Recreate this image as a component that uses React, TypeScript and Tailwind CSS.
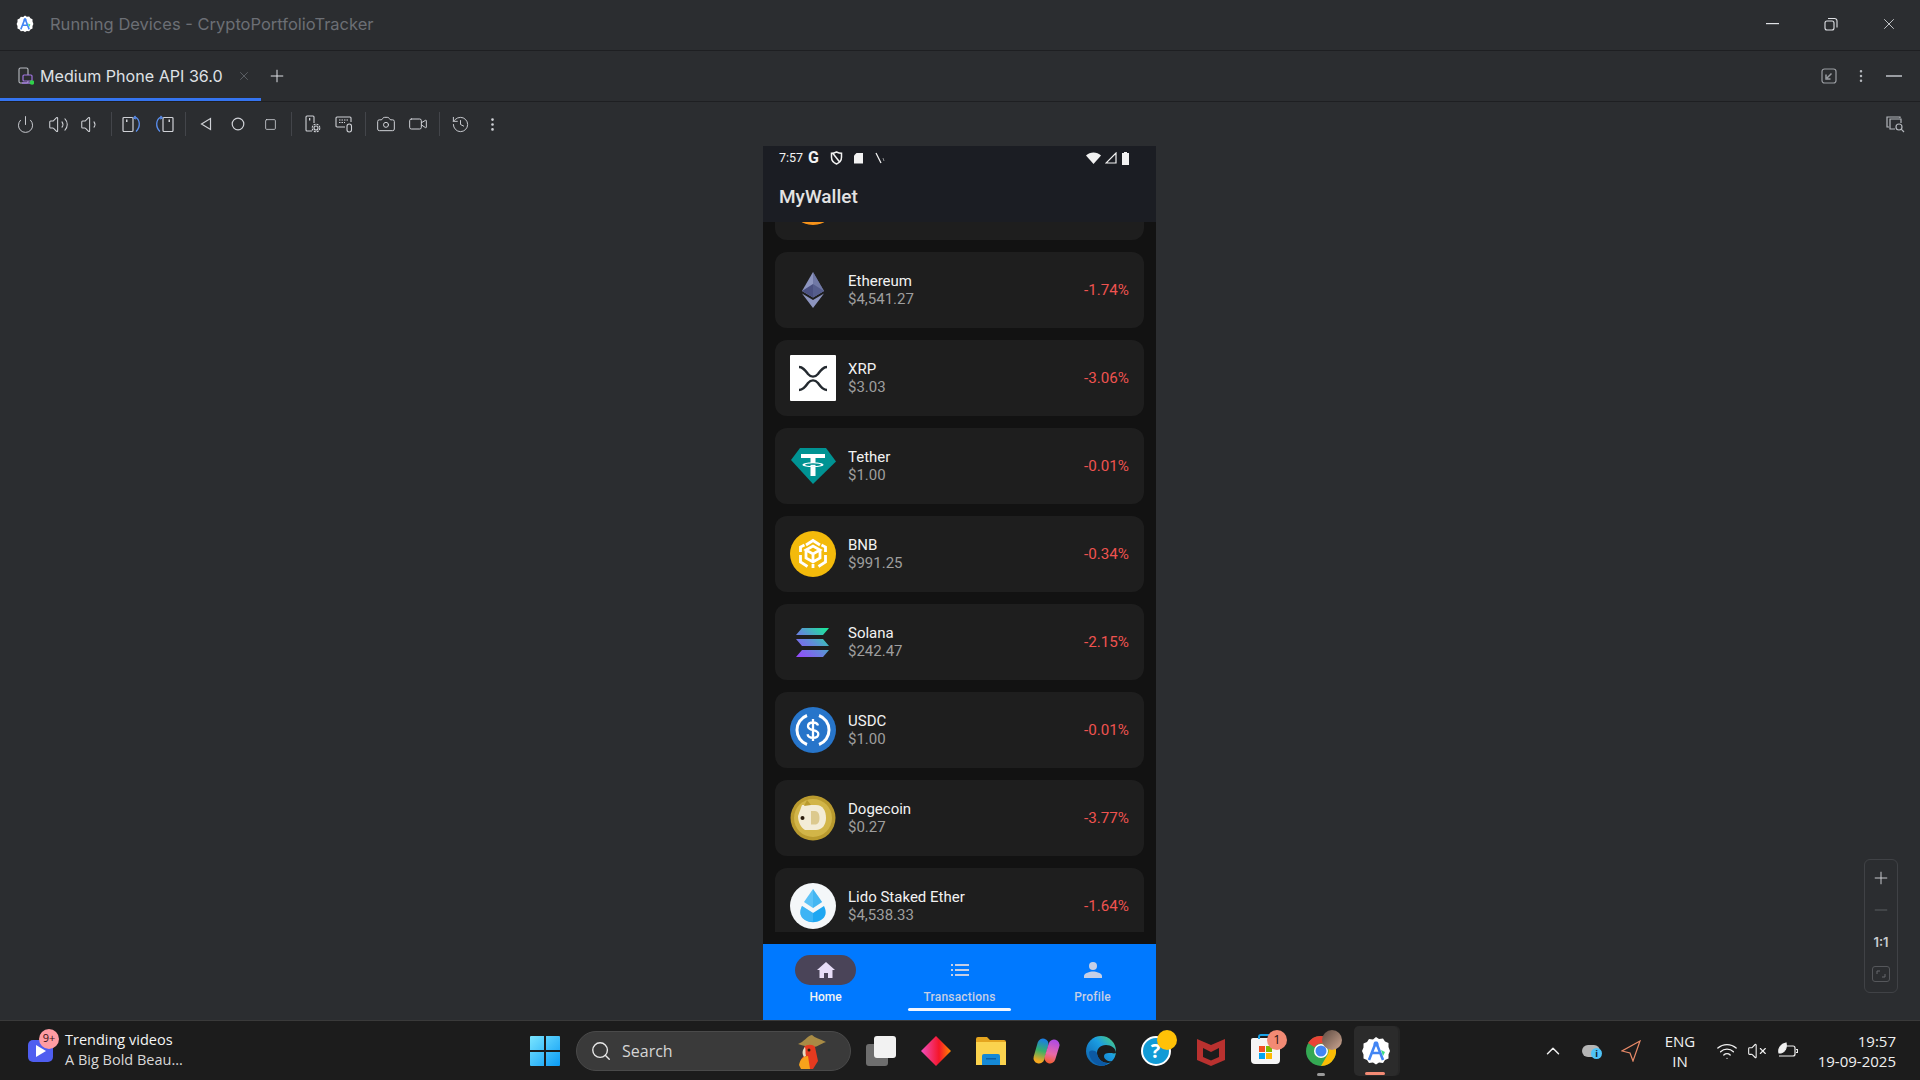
import { Camera, ChevronUp, EllipsisVertical, History, Minus, Plus, Power, Search, Square, Video, Volume1, Volume2, VolumeX, Wifi, X } from "lucide-react";

const ideFont = "font-['Inter',sans-serif]";
const phoneFont = "font-['Roboto',sans-serif]";
const winFont = "font-['Open_Sans',sans-serif]";

function AndroidStudioLogo({ size = 18 }: { size?: number }) {
  return (
    <svg width={size} height={size} viewBox="0 0 30 30">
      <path d="M15 1l3 2 4-.5 2 3 3.500 1.500 0 4L29 15l-1.500 3.500 0 4-3.500 1.500-2 3-4-.5-3 2-3-2-4 .5-2-3-3.500-1.500 0-4L1 15l1.500-3.500 0-4L6 6l2-3 4 .5z" fill="#fff" />
      <path d="M15 6l-7 18M15 6l7 18M10 17h10" stroke="#4285f4" strokeWidth="2.600" fill="none" />
      <circle cx="15" cy="8" r="2.500" fill="#4285f4" />
      <path d="M20 14l4 2-2 4z" fill="#3ddc84" />
    </svg>
  );
}

function RotateIcon({ flip }: { flip?: boolean }) {
  return (
    <svg width="20" height="18" viewBox="0 0 20 18" fill="none" className={flip ? "-scale-x-100" : ""}>
      <rect x="1" y="2.500" width="10" height="14" rx="1" stroke="#cfd1d6" strokeWidth="1.200" />
      <rect x="4" y="4.500" width="1.500" height="2.500" fill="#cfd1d6" />
      <path d="M13 2c5 2 6 10 1 14.500" stroke="#5a8ff0" strokeWidth="1.300" />
      <path d="M11.500 3l2-2M11.500 3l2.500 1" stroke="#5a8ff0" strokeWidth="1.300" />
    </svg>
  );
}

function ToolSlot({ children }: { children: React.ReactNode }) {
  return <div className="flex h-8 w-8 items-center justify-center text-[#cfd1d6]">{children}</div>;
}

function ToolSep() {
  return (
    <div className="flex w-[10px] justify-center">
      <div className="h-[24px] w-px bg-[#43454a]" />
    </div>
  );
}

function TitleBar() {
  return (
    <div className={`flex h-[51px] shrink-0 items-center border-b border-[#1e1f22] pb-[2px] pl-4 ${ideFont}`}>
      <AndroidStudioLogo />
      <span className="ml-[16px] text-[16.500px] text-[#6c6f75]">Running Devices - CryptoPortfolioTracker</span>
      <div className="ml-auto flex items-center text-[#e0e2e6]">
        <div className="flex w-[58px] justify-center"><svg width="14" height="2"><rect width="13" height="1.200" fill="#dfe1e5" /></svg></div>
        <div className="flex w-[58px] justify-center">
          <svg width="14" height="14" viewBox="0 0 14 14" fill="none" stroke="#dfe1e5" strokeWidth="1.100">
            <rect x="1" y="4" width="9" height="9" rx="2" />
            <path d="M4 1.500h6.500a2.500 2.500 0 0 1 2.500 2.500v6.500" />
          </svg>
        </div>
        <div className="mr-[2px] flex w-[58px] justify-center"><X size={18} strokeWidth={1.100} /></div>
      </div>
    </div>
  );
}

function TabBar() {
  return (
    <div className={`relative flex h-[51px] shrink-0 items-center border-b border-[#1e1f22] ${ideFont}`}>
      <div className="flex h-full w-[261px] items-center border-b-[3px] border-[#3574f0] pl-[18px] pt-[3px]">
        <svg width="16" height="18" viewBox="0 0 16 18" fill="none">
          <rect x="1" y="1" width="9" height="15" rx="1.500" stroke="#b9bcc2" strokeWidth="1.100" />
          <rect x="5" y="8" width="9" height="6" rx="1" fill="#2b2d30" stroke="#a074e0" strokeWidth="1.200" />
          <path d="M4 16h11" stroke="#a074e0" strokeWidth="1.400" />
          <circle cx="14" cy="15.500" r="2.300" fill="#2fd14a" />
        </svg>
        <span className="ml-[6px] text-[16.100px] text-[#dfe1e5]">Medium Phone API 36.0</span>
        <X size={14} strokeWidth={1.200} className="ml-[14px] text-[#6f7278]" />
      </div>
      <Plus size={20} strokeWidth={1.200} className="ml-[6px] text-[#dfe1e5]" />
      <div className="ml-auto flex items-center pr-[18px] text-[#b4b7bc]">
        <svg width="16" height="16" viewBox="0 0 16 16" fill="none">
          <rect x="1" y="1" width="14" height="14" rx="2.500" stroke="#9a9da2" strokeWidth="1.200" />
          <path d="M10.500 5.500L6 10M5 6.500V11h4.500" stroke="#9a9da2" strokeWidth="1.500" />
        </svg>
        <div className="ml-[16px] flex w-4 justify-center"><EllipsisVertical size={16} strokeWidth={1.800} /></div>
        <div className="ml-[17px] h-[2px] w-4 bg-[#9a9da2]" />
      </div>
    </div>
  );
}

function Toolbar() {
  return (
    <div className="flex h-[44px] shrink-0 items-center pl-[9px]">
      <ToolSlot><Power size={19} strokeWidth={1.200} /></ToolSlot>
      <div className="ml-[1px]"><ToolSlot><Volume2 size={21} strokeWidth={1.200} /></ToolSlot></div>
      <ToolSlot><Volume1 size={21} strokeWidth={1.200} /></ToolSlot>
      <ToolSep />
      <ToolSlot><RotateIcon /></ToolSlot>
      <ToolSlot><RotateIcon flip /></ToolSlot>
      <ToolSep />
      <ToolSlot>
        <svg width="12" height="14" viewBox="0 0 12 14" fill="none" stroke="#cfd1d6" strokeWidth="1.200"><path d="M10.500 1.500v11L1.500 7z" /></svg>
      </ToolSlot>
      <ToolSlot><svg width="14" height="14" viewBox="0 0 14 14" fill="none" stroke="#cfd1d6" strokeWidth="1.200"><circle cx="7" cy="7" r="5.800" /></svg></ToolSlot>
      <ToolSlot><Square size={13} strokeWidth={1.500} /></ToolSlot>
      <ToolSep />
      <ToolSlot>
        <svg width="17" height="18" viewBox="0 0 17 18" fill="none" stroke="#cfd1d6" strokeWidth="1.100">
          <path d="M8 16H3a1 1 0 0 1-1-1V2a1 1 0 0 1 1-1h6a1 1 0 0 1 1 1v6" />
          <rect x="5" y="3" width="1.300" height="2.500" fill="#cfd1d6" stroke="none" />
          <circle cx="12" cy="13" r="2" />
          <circle cx="12" cy="13" r="3.800" strokeDasharray="2 1" />
        </svg>
      </ToolSlot>
      <ToolSlot>
        <svg width="18" height="18" viewBox="0 0 18 18" fill="none" stroke="#cfd1d6" strokeWidth="1.100">
          <path d="M10 12H2a1 1 0 0 1-1-1V3a1 1 0 0 1 1-1h13a1 1 0 0 1 1 1v4" />
          <path d="M4 5h9M4 7.500h6" strokeDasharray="1.500 1" />
          <rect x="12" y="9" width="4.500" height="8" rx="2.200" />
        </svg>
      </ToolSlot>
      <ToolSep />
      <ToolSlot><Camera size={20} strokeWidth={1.200} /></ToolSlot>
      <ToolSlot><Video size={20} strokeWidth={1.200} /></ToolSlot>
      <ToolSep />
      <ToolSlot><History size={19} strokeWidth={1.200} /></ToolSlot>
      <ToolSlot><EllipsisVertical size={17} strokeWidth={1.800} /></ToolSlot>
      <div className="ml-auto pr-[15px]">
        <svg width="19" height="18" viewBox="0 0 19 18" fill="none" stroke="#b4b7bc" strokeWidth="1.200">
          <path d="M3 12H1V2h13v1" />
          <path d="M9 14H4V4h11v4" />
          <circle cx="13" cy="12" r="3" />
          <path d="M15.200 14.200l2.800 2.800" />
        </svg>
      </div>
    </div>
  );
}

function BtcIcon() {
  return <div className="h-[46px] w-[46px] rounded-full bg-[#f7931a]" />;
}

function EthIcon() {
  return (
    <svg width="46" height="46" viewBox="0 0 46 46">
      <path d="M23 5L12 24l11 6.500L34 24z" fill="#8d95bf" />
      <path d="M23 17l-11 7 11 6.500L34 24z" fill="#4a5080" />
      <path d="M23 5v25.500L34 24z" fill="#5d6595" opacity="0.600" />
      <path d="M12 26.500L23 41l11-14.500-11 6.500z" fill="#8d95bf" />
    </svg>
  );
}

function XrpIcon() {
  return (
    <svg width="46" height="46" viewBox="0 0 46 46">
      <rect width="46" height="46" rx="1" fill="#fff" />
      <path d="M9 12c4 0 6 3 9 7 3 3.500 7 3.500 10 0 3-4 5-7 9-7M9 35c4 0 6-3 9-7 3-3.500 7-3.500 10 0 3 4 5 7 9 7" fill="none" stroke="#23292f" strokeWidth="2.400" />
    </svg>
  );
}

function TetherIcon() {
  return (
    <svg width="46" height="46" viewBox="0 0 46 46">
      <g transform="translate(0 2)">
        <path d="M10 3h26l10 13.500L23 39 1 15z" fill="#009393" />
        <path d="M11 9h24v4H25.500v4.500c4.500.2 8 1 8 2.300s-3.500 2.100-8 2.300V31h-5v-8.900c-4.500-.2-8-1-8-2.300s3.500-2.100 8-2.300V13H11z" fill="#fff" />
        <ellipse cx="23" cy="19.800" rx="8" ry="1.500" fill="#009393" />
        <rect x="20.500" y="19.800" width="5" height="1.800" fill="#fff" />
      </g>
    </svg>
  );
}

function BnbIcon() {
  return (
    <svg width="46" height="46" viewBox="0 0 46 46">
      <circle cx="23" cy="23" r="23" fill="#f3ba0b" />
      <g fill="none" stroke="#fff" strokeWidth="2.800">
        <path d="M16 14l7-4.500 7 4.500M10.500 21v-5l4-2M35.500 21v-5l-4-2" />
        <path d="M16 19l7-4 7 4-7 4zM16 20v7l7 4 7-4v-7M23 23v8" />
        <path d="M10.500 24v7l7 4.500M35.500 24v7l-7 4.500M23 33v4" />
      </g>
    </svg>
  );
}

function SolanaIcon() {
  return (
    <svg width="46" height="46" viewBox="0 0 46 46">
      <defs>
        <linearGradient id="sol" x1="0" y1="1" x2="1" y2="0">
          <stop offset="0" stopColor="#9945ff" />
          <stop offset="0.500" stopColor="#5f8dd8" />
          <stop offset="1" stopColor="#14f195" />
        </linearGradient>
      </defs>
      <path d="M12 9h27l-6 7H6zM6 20h27l6 7H12zM12 31h27l-6 7H6z" fill="url(#sol)" />
    </svg>
  );
}

function UsdcIcon() {
  return (
    <svg width="46" height="46" viewBox="0 0 46 46">
      <circle cx="23" cy="23" r="23" fill="#2775ca" />
      <path d="M17 8.500a15.500 15.500 0 0 0 0 29M29 8.500a15.500 15.500 0 0 1 0 29" fill="none" stroke="#fff" strokeWidth="3" />
      <path d="M28 18.500c-.5-2-2.500-3-5-3s-5 1.200-5 3.800c0 5.400 10.300 2.400 10.300 7.700 0 2.600-2.500 3.800-5.300 3.800s-5-1.200-5.500-3.500M23 12v22" fill="none" stroke="#fff" strokeWidth="2.300" />
    </svg>
  );
}

function DogeIcon() {
  return (
    <svg width="46" height="46" viewBox="0 0 46 46">
      <circle cx="23" cy="23" r="22.500" fill="#b99a2e" />
      <circle cx="23" cy="23" r="19" fill="#d2b548" />
      <path d="M12 10h14c7 0 10 6 10 13s-4 12-10 12H15c-4-2-7-8-7-14z" fill="#f3ecd6" />
      <path d="M21 16h4c3 0 4.500 3 4.500 7s-1.500 6.500-4.500 6.500h-4z" fill="#dcc98e" />
      <circle cx="12.500" cy="23" r="2" fill="#2b1d0e" />
      <path d="M14 11l3-6 4 5z" fill="#b99a2e" />
    </svg>
  );
}

function LidoIcon() {
  return (
    <svg width="46" height="46" viewBox="0 0 46 46">
      <circle cx="23" cy="23" r="23" fill="#f4f7f9" />
      <path d="M23 6l9 13-9 6-9-6z" fill="#5cc2f7" />
      <path d="M23 6v19l9-6z" fill="#34aeee" opacity="0.600" />
      <path d="M12 23l11 7 11-7c3 6 2 11-3 14-5 3-11 3-16 0-5-3-6-8-3-14z" fill="#1ea7f2" />
      <path d="M23 30v8.500c-3 0-6-.5-8-1.500-5-3-6-8-3-14z" fill="#5cc2f7" opacity="0.500" />
    </svg>
  );
}

// first card only shows its lower edge under the app bar, so it has no text to draw
const coins = [
  { name: "", price: "", change: "", Icon: BtcIcon },
  { name: "Ethereum", price: "$4,541.27", change: "-1.74%", Icon: EthIcon },
  { name: "XRP", price: "$3.03", change: "-3.06%", Icon: XrpIcon },
  { name: "Tether", price: "$1.00", change: "-0.01%", Icon: TetherIcon },
  { name: "BNB", price: "$991.25", change: "-0.34%", Icon: BnbIcon },
  { name: "Solana", price: "$242.47", change: "-2.15%", Icon: SolanaIcon },
  { name: "USDC", price: "$1.00", change: "-0.01%", Icon: UsdcIcon },
  { name: "Dogecoin", price: "$0.27", change: "-3.77%", Icon: DogeIcon },
  { name: "Lido Staked Ether", price: "$4,538.33", change: "-1.64%", Icon: LidoIcon },
];

function CoinCard({ coin }: { coin: (typeof coins)[number] }) {
  const { Icon } = coin;
  return (
    <div className="flex h-[76px] shrink-0 items-center rounded-[12px] bg-[#1e1e1e] px-[15px]">
      <Icon />
      <div className="ml-[12px] flex flex-col">
        <span className="text-[15px] leading-[18px] text-[#f2f2f2]">{coin.name}</span>
        <span className="text-[15px] leading-[18px] text-[#9e9e9e]">{coin.price}</span>
      </div>
      <span className="ml-auto text-[15.200px] text-[#ef5350]">{coin.change}</span>
    </div>
  );
}

function StatusBar() {
  return (
    <div className="flex h-[24px] items-center pl-4 pr-[26px] text-[#f2f2f2]">
      <span className="text-[12.500px]">7:57</span>
      <span className="ml-[5px] text-[16px] font-bold leading-none">G</span>
      <svg width="13" height="14" viewBox="0 0 13 14" className="ml-[11px]" fill="none" stroke="#f2f2f2" strokeWidth="1.500">
        <path d="M6.500 1C4.500 2 3 2.300 1.500 2.300v4c0 3.500 2.500 5.700 5 6.700 2.500-1 5-3.200 5-6.700v-4C10 2.300 8.500 2 6.500 1zM3 2.500l7 9" />
      </svg>
      <svg width="11" height="12" viewBox="0 0 11 12" className="ml-[10px]"><path d="M3.500 1H10v10.500H1V3.500z" fill="#f2f2f2" /></svg>
      <svg width="12" height="12" viewBox="0 0 12 12" className="ml-[10px]" stroke="#f2f2f2" strokeWidth="1.200"><path d="M2 1l5 10" /><path d="M9 6l1 3" strokeWidth="0.500" /></svg>
      <div className="ml-auto flex items-center gap-[4px]">
        <svg width="15" height="12" viewBox="0 0 15 12"><path d="M0 3.500C4-.5 11-.5 15 3.500L7.500 12z" fill="#f2f2f2" /></svg>
        <svg width="12" height="12" viewBox="0 0 12 12"><path d="M11 1v10H1z" fill="none" stroke="#f2f2f2" strokeWidth="1.200" /></svg>
        <svg width="9" height="13" viewBox="0 0 9 13"><path d="M3 0h3v1h2v12H1V1h2z" fill="#f2f2f2" /></svg>
      </div>
    </div>
  );
}

function BottomNav() {
  return (
    <div className="flex h-[76px] shrink-0 bg-[#0079ff]">
      <div className="flex w-[125px] flex-col items-center pt-[11px]">
        <div className="flex h-[30px] w-[61px] items-center justify-center rounded-full bg-[#4a4458]">
          <svg width="18" height="16" viewBox="0 0 18 16"><path d="M9 0L0 8h2.500v8H7v-5h4v5h4.500V8H18z" fill="#e8def8" /></svg>
        </div>
        <span className="mt-[4px] text-[12px] font-medium leading-[16px] text-[#f3f3f3]">Home</span>
      </div>
      <div className="flex w-[143px] flex-col items-center pt-[11px]">
        <div className="flex h-[30px] items-center justify-center">
          <svg width="18" height="12" viewBox="0 0 18 12" fill="#c5cfe6">
            <rect width="2" height="2" />
            <rect x="4" width="14" height="2" />
            <rect y="5" width="2" height="2" />
            <rect x="4" y="5" width="14" height="2" />
            <rect y="10" width="2" height="2" />
            <rect x="4" y="10" width="14" height="2" />
          </svg>
        </div>
        <span className="mt-[4px] text-[12px] font-medium leading-[16px] tracking-[0.200px] text-[#c5cfe6]">Transactions</span>
        <div className="mt-[3px] h-[3px] w-[103px] rounded-full bg-[#f2f6ff]" />
      </div>
      <div className="flex flex-1 flex-col items-center pr-[2px] pt-[11px]">
        <div className="flex h-[30px] items-center justify-center">
          <svg width="18" height="16" viewBox="0 0 18 16" fill="#c5cfe6">
            <circle cx="9" cy="4" r="4" />
            <path d="M0 16v-2c0-3 6-4.500 9-4.500s9 1.500 9 4.500v2z" />
          </svg>
        </div>
        <span className="mt-[4px] text-[12px] font-medium leading-[16px] tracking-[0.200px] text-[#c5cfe6]">Profile</span>
      </div>
    </div>
  );
}

function Phone() {
  return (
    <div className={`flex h-full w-[393px] flex-col bg-[#121212] ${phoneFont}`}>
      <div className="shrink-0 bg-[#1b1d23]">
        <StatusBar />
        <div className="flex h-[52px] items-center pl-4 pt-[2px]">
          <span className="text-[19px] font-medium text-[#e3e3e3]">MyWallet</span>
        </div>
      </div>
      <div className="flex-1 overflow-hidden pb-[12px]">
        <div className="h-full overflow-hidden px-3">
          <div className="mt-[-58px] flex flex-col gap-[12px]">
            {coins.map((c, i) => (
              <CoinCard key={i} coin={c} />
            ))}
          </div>
        </div>
      </div>
      <BottomNav />
    </div>
  );
}

function ZoomPanel() {
  return (
    <div className={`absolute bottom-[27px] right-[22px] flex h-[134px] w-[34px] flex-col items-center rounded-[6px] border border-[#404246] ${ideFont}`}>
      <Plus size={20} strokeWidth={1.100} className="mt-[8px] text-[#d5d7db]" />
      <Minus size={20} strokeWidth={1.100} className="mt-[12px] text-[#5f6266]" />
      <span className="mt-[13px] text-[13px] font-semibold text-[#c9cbcf]">1:1</span>
      <div className="mt-[13px] flex h-[16px] w-[18px] items-center justify-center rounded-[3px] border border-[#55575b]">
        <svg width="10" height="8" viewBox="0 0 10 8" fill="none" stroke="#66686c"><path d="M1 4V1h3M9 4v3H6" /></svg>
      </div>
    </div>
  );
}

function TaskIcon({ children, slot = "" }: { children: React.ReactNode; slot?: string }) {
  return <div className={`relative flex h-[50px] w-[55px] items-center justify-center ${slot}`}>{children}</div>;
}

function Taskbar() {
  return (
    <div className={`flex h-[60px] shrink-0 items-center border-t border-[#3a3a3a] bg-[#1c1c1c] ${winFont}`}>
      <div className="flex w-[530px] items-center pl-[28px]">
        <div className="relative">
          <div className="flex h-[22px] w-[25px] items-center justify-center rounded-[5px] bg-[#4f5ef0]">
            <svg width="10" height="12" viewBox="0 0 10 12"><path d="M0 0l10 6-10 6z" fill="#fff" /></svg>
          </div>
          <span className="absolute left-[11px] top-[-11px] flex h-5 w-5 items-center justify-center rounded-full bg-[#ff9ca3] text-[11px] text-[#3a1014]">9+</span>
        </div>
        <div className="ml-[12px] mb-[2px] flex flex-col">
          <span className="text-[14.500px] leading-[20px] text-[#f5f5f5]">Trending videos</span>
          <span className="text-[14.500px] leading-[20px] text-[#d8d8d8]">A Big Bold Beau...</span>
        </div>
      </div>
      <svg width="30" height="30" viewBox="0 0 30 30">
        <defs>
          <linearGradient id="win" x1="0" y1="0" x2="1" y2="1">
            <stop offset="0" stopColor="#7ae5ff" />
            <stop offset="1" stopColor="#0a9bf5" />
          </linearGradient>
        </defs>
        <path d="M0 1a1 1 0 0 1 1-1h13v14H0zM16 0h13a1 1 0 0 1 1 1v13H16zM0 16h14v14H1a1 1 0 0 1-1-1zM16 16h14v13a1 1 0 0 1-1 1H16z" fill="url(#win)" />
      </svg>
      <div className="ml-[16px] flex h-10 w-[275px] items-center rounded-full border border-[#4a4a4a] bg-[#3a3a3a] pl-[13px]">
        <Search size={22} strokeWidth={1.500} className="text-[#e8e8e8]" />
        <span className="ml-[10px] text-[16px] text-[#d5d5d5]">Search</span>
        <svg width="32" height="36" viewBox="0 0 32 36" className="ml-auto mr-[22px]">
          <path d="M2 11c6-2 9-8 14-9 3 3 8 4 14 7-6 2-9 5-12 5-5 0-11-1-16-3z" fill="#a88b45" />
          <path d="M8 14c3-3 9-3 11 0l3 14-5 8H7c-3-5-4-9 1-13z" fill="#e53a1f" />
          <path d="M9 14c1 3 0 6 1 9l-2 1c-2-3-2-7 1-10z" fill="#e8dcc0" />
          <path d="M3 32c1-6 5-9 9-9l2 13H5z" fill="#f7a21b" />
          <circle cx="13" cy="17" r="1.500" fill="#2b1d0e" />
        </svg>
      </div>
      <TaskIcon slot="ml-[2px]">
        <div className="relative h-[30px] w-[30px]">
          <div className="absolute bottom-0 left-0 h-[22px] w-[22px] rounded-[3px] bg-[#6e6e6e]" />
          <div className="absolute right-0 top-0 h-[22px] w-[22px] rounded-[3px] bg-[#f2f2f2]" />
        </div>
      </TaskIcon>
      <TaskIcon>
        <svg width="30" height="30" viewBox="0 0 30 30">
          <defs>
            <linearGradient id="dia" x1="0" y1="0" x2="1" y2="0">
              <stop offset="0" stopColor="#f04fc0" />
              <stop offset="0.600" stopColor="#f5162a" />
              <stop offset="1" stopColor="#ff8a00" />
            </linearGradient>
          </defs>
          <path d="M15 0l15 15-15 15L0 15z" fill="url(#dia)" />
        </svg>
      </TaskIcon>
      <TaskIcon>
        <svg width="30" height="28" viewBox="0 0 30 28">
          <path d="M0 2a2 2 0 0 1 2-2h9l3 3h14a2 2 0 0 1 2 2v5H0z" fill="#e5a51f" />
          <path d="M0 5h30v23H0z" fill="#fbd34e" />
          <path d="M6 19a2 2 0 0 1 2-2h14a2 2 0 0 1 2 2v9H6z" fill="#1589d6" />
          <rect x="10" y="21" width="10" height="1.500" fill="#0c5fa3" />
        </svg>
      </TaskIcon>
      <TaskIcon>
        <svg width="30" height="28" viewBox="0 0 30 28" fill="none" strokeLinecap="round">
          <defs>
            <linearGradient id="cop1" gradientUnits="userSpaceOnUse" x1="7" y1="24" x2="13" y2="3">
              <stop offset="0" stopColor="#f6a81f" />
              <stop offset="0.500" stopColor="#35b06a" />
              <stop offset="1" stopColor="#1c7fe0" />
            </linearGradient>
            <linearGradient id="cop2" gradientUnits="userSpaceOnUse" x1="23" y1="4" x2="17" y2="25">
              <stop offset="0" stopColor="#b14ce0" />
              <stop offset="0.600" stopColor="#e86aa8" />
              <stop offset="1" stopColor="#f2603a" />
            </linearGradient>
          </defs>
          <path d="M12 7L8 21" stroke="url(#cop1)" strokeWidth="11" />
          <path d="M23 8l-4 13" stroke="url(#cop2)" strokeWidth="11" />
        </svg>
      </TaskIcon>
      <TaskIcon>
        <svg width="30" height="30" viewBox="0 0 30 30">
          <defs>
            <linearGradient id="edge" x1="0" y1="1" x2="1" y2="0">
              <stop offset="0" stopColor="#0c59a4" />
              <stop offset="0.600" stopColor="#1b9de2" />
              <stop offset="1" stopColor="#54d66b" />
            </linearGradient>
          </defs>
          <circle cx="15" cy="15" r="15" fill="url(#edge)" />
          <path d="M30 17c0-5-5-8-10-8-6 0-9 4-9 8 0 5 5 10 11 10 2 0 4-1 5-2-4 1-9-1-9-5 0-2 2-3 5-3s5 1 7 0z" fill="#1c1c1c" />
          <path d="M11 17c0 5 5 10 11 10l-4 3c-8 0-15-6-15-14 2-2 6-2 8 1z" fill="#0c59a4" />
        </svg>
      </TaskIcon>
      <TaskIcon>
        <div className="flex h-[30px] w-[30px] items-center justify-center rounded-full border-[2.500px] border-white bg-[#129bd6] text-[20px] font-bold leading-none text-white">?</div>
        <div className="absolute left-[29px] top-[4px] h-5 w-5 rounded-full bg-[#ffc107]" />
      </TaskIcon>
      <TaskIcon>
        <svg width="28" height="30" viewBox="0 0 28 30">
          <path d="M0 3l14 6 14-6v21l-14 6-14-6z" fill="#b9312f" />
          <path d="M6 12l8 4 8-4v9l-8 3.500L6 21z" fill="#1c1c1c" />
        </svg>
      </TaskIcon>
      <TaskIcon>
        <div className="relative h-[26px] w-[29px] rounded-b-[4px] rounded-t-[2px] bg-[#f5f5f5]">
          <div className="absolute left-[7px] top-[-4px] h-[5px] w-[15px] rounded-t-[3px] border-x-2 border-t-2 border-[#1aa3e8]" />
          <div className="absolute left-[8px] top-[8px] grid grid-cols-2 gap-[1px]">
            <div className="h-[6px] w-[6px] bg-[#f25022]" />
            <div className="h-[6px] w-[6px] bg-[#7fba00]" />
            <div className="h-[6px] w-[6px] bg-[#00a4ef]" />
            <div className="h-[6px] w-[6px] bg-[#ffb900]" />
          </div>
        </div>
        <span className="absolute left-[29px] top-[4px] flex h-5 w-5 items-center justify-center rounded-full bg-[#f28a74] text-[13px] text-[#2a1410]">1</span>
      </TaskIcon>
      <TaskIcon>
        <svg width="30" height="30" viewBox="0 0 30 30">
          <circle cx="15" cy="15" r="15" fill="#34a853" />
          <path d="M15 0a15 15 0 0 1 13 7.500H15a7.500 7.500 0 0 0-6.500 3.800L2 7A15 15 0 0 1 15 0z" fill="#ea4335" />
          <path d="M28 7.500A15 15 0 0 1 15 30l6.500-11.200A7.500 7.500 0 0 0 15 7.500z" fill="#fbbc05" />
          <circle cx="15" cy="15" r="7" fill="#fff" />
          <circle cx="15" cy="15" r="5.500" fill="#4285f4" />
        </svg>
        <div className="absolute left-[29px] top-[4px] h-5 w-5 rounded-full bg-gradient-to-br from-[#5e4b42] to-[#cfa893]" />
        <div className="absolute bottom-0 left-[24px] h-[3px] w-[8px] rounded-full bg-[#9a9a9a]" />
      </TaskIcon>
      <TaskIcon>
        <div className="absolute right-[3px] top-0 h-[50px] w-[20px] rounded-r-[5px] bg-[#262626]" />
        <div className="relative flex h-[50px] w-[44px] items-center justify-center rounded-[5px] bg-[#2b2b2b]">
          <AndroidStudioLogo size={30} />
        </div>
        <div className="absolute bottom-[1px] left-[17px] h-[3px] w-[20px] rounded-full bg-[#f28a74]" />
      </TaskIcon>
      <div className="ml-auto flex w-[385px] items-center text-[#f0f0f0]">
        <div className="flex w-[36px] justify-center"><ChevronUp size={22} strokeWidth={1.600} /></div>
        <div className="relative flex w-[40px] justify-center">
          <div className="h-[12px] w-[18px] rounded-full bg-[#b5b5b5]" />
          <div className="absolute left-[20px] top-[3px] flex h-[11px] w-[11px] items-center justify-center rounded-full bg-[#4fc3f7] text-[9px] font-bold leading-none text-[#10202a]">i</div>
        </div>
        <div className="flex w-[40px] justify-center">
          <svg width="20" height="22" viewBox="0 0 20 22" fill="none" stroke="#e88a68" strokeWidth="1.200"><path d="M19 1L1 11l8 2 3 8z" /></svg>
        </div>
        <div className="flex w-[58px] flex-col items-center text-[15px] leading-[20px]">
          <span>ENG</span>
          <span>IN</span>
        </div>
        <div className="flex w-[36px] justify-center"><Wifi size={22} strokeWidth={1.400} /></div>
        <div className="flex w-[24px] justify-center"><VolumeX size={20} strokeWidth={1.300} /></div>
        <div className="flex w-[36px] justify-center">
          <svg width="21" height="18" viewBox="0 0 21 18" fill="none" stroke="#f0f0f0" strokeWidth="1.200">
            <path d="M9 4h7a2 2 0 0 1 2 2v6a2 2 0 0 1-2 2H2M19 7.500h1.500v3H19" />
            <path d="M2 11C1 6 4 2 9 1c1 5-1 9-5 10z" fill="#f0f0f0" />
          </svg>
        </div>
        <div className="flex flex-1 flex-col items-end pr-[24px] text-[15px] leading-[20px]">
          <span>19:57</span>
          <span>19-09-2025</span>
        </div>
      </div>
    </div>
  );
}

export default function App() {
  return (
    <div className="flex h-screen w-[1920px] flex-col overflow-hidden bg-[#2b2d30]">
      <TitleBar />
      <TabBar />
      <Toolbar />
      <div className="relative flex min-h-0 flex-1 justify-center">
        <div className="ml-[-1px] h-full">
          <Phone />
        </div>
        <ZoomPanel />
      </div>
      <Taskbar />
    </div>
  );
}
